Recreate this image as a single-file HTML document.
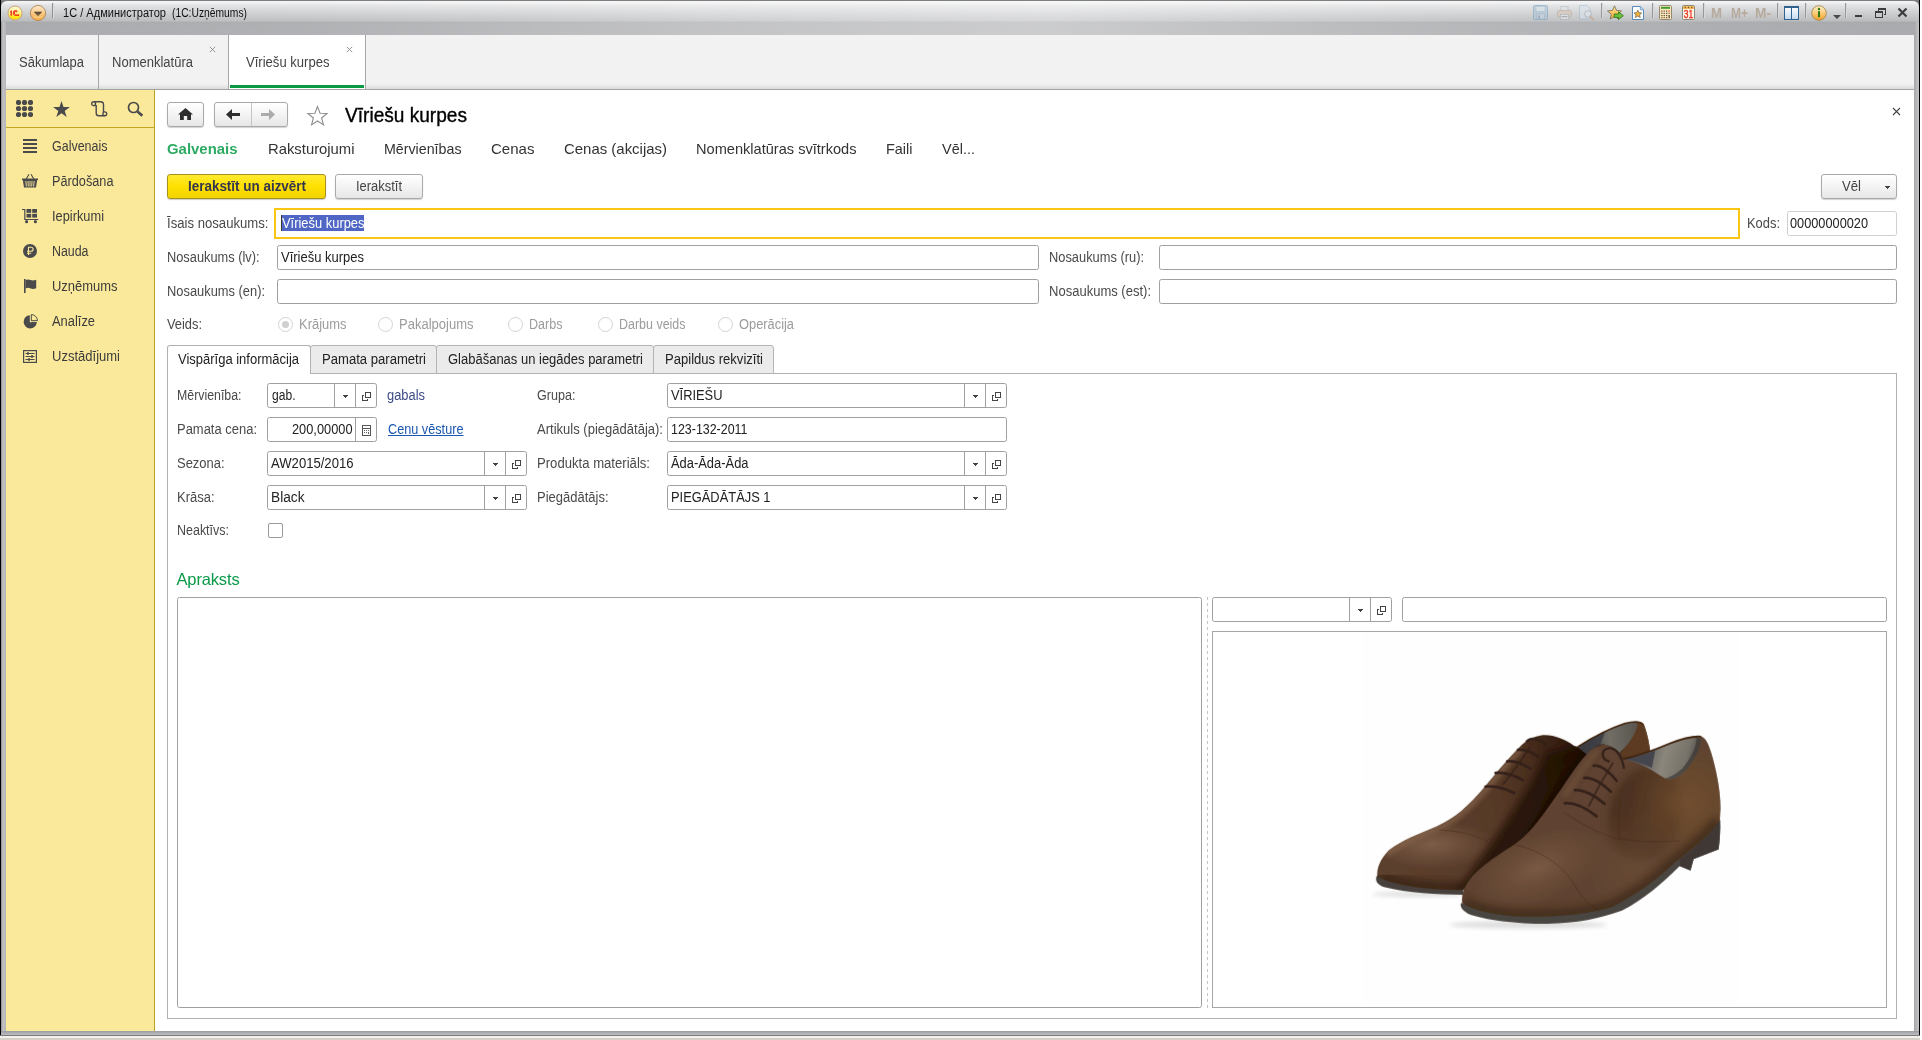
<!DOCTYPE html>
<html lang="lv"><head><meta charset="utf-8"><title>Vīriešu kurpes</title>
<style>
html,body{margin:0;padding:0;background:#fff;}
body{width:1922px;height:1040px;position:relative;overflow:hidden;font-family:"Liberation Sans", sans-serif;}
#root div,#root svg{position:absolute;box-sizing:border-box;}
.t{position:absolute;white-space:pre;line-height:20px;height:20px;}
#root{position:absolute;left:0;top:0;width:1922px;height:1040px;will-change:transform;}
</style></head>
<body><div id="root">
<div style="left:0px;top:0px;width:1920px;height:35px;background:#7e7e80;"></div>
<div style="left:1px;top:1px;width:1918px;height:34px;border-radius:6px 6px 0 0;background:linear-gradient(#f4f4f5 0,#f0f0f1 2px,#e2e3e4 4px,#cbccce 13px,#bbbcbe 20px,#a9aaad 21px,#abacaf 34px);"></div>
<div style="left:1px;top:1px;width:1918px;height:34px;border-radius:6px 6px 0 0;background:linear-gradient(90deg,rgba(255,255,255,0) 0,rgba(255,255,255,.08) 16%,rgba(255,255,255,.3) 38%,rgba(255,255,255,.4) 54%,rgba(255,255,255,.18) 73%,rgba(255,255,255,.04) 90%,rgba(255,255,255,0) 99%);"></div>
<div style="left:0px;top:0px;width:1px;height:1036px;background:#000;"></div>
<div style="left:1px;top:22px;width:5px;height:1014px;background:linear-gradient(90deg,#8e8e90,#c4c4c6 40%,#b4b4b7);"></div>
<div style="left:1914px;top:22px;width:5px;height:1014px;background:linear-gradient(90deg,#a6a6a9,#b6b6b9 50%,#c6c6c8);"></div>
<div style="left:1919px;top:0px;width:1px;height:1036px;background:#000;"></div>
<div style="left:1px;top:1031px;width:1918px;height:4px;background:linear-gradient(#9b9ca0,#adaeb1 50%,#bcbdc0);"></div>
<div style="left:0px;top:1035px;width:1920px;height:1px;background:#7b7b7d;"></div>
<div style="left:0px;top:1036px;width:1920px;height:2px;background:#f2f1ea;"></div>
<div style="left:0px;top:1038px;width:1920px;height:2px;background:#d4d0c8;"></div>
<div style="left:6px;top:35px;width:1908px;height:54px;background:#f2f2f2;"></div>
<div style="left:6px;top:84px;width:1908px;height:5px;background:linear-gradient(#f2f2f2,#dcdcdc);"></div>
<div style="left:6px;top:89px;width:1908px;height:1px;background:#a3a3a3;"></div>
<div style="left:98px;top:35px;width:1px;height:54px;background:#a8a8a8;"></div>
<div style="left:228px;top:35px;width:1px;height:54px;background:#a8a8a8;"></div>
<div style="left:365px;top:35px;width:1px;height:54px;background:#a8a8a8;"></div>
<div style="left:229px;top:35px;width:136px;height:54px;background:#fff;"></div>
<div style="left:230px;top:85px;width:134px;height:3px;background:#0a9a44;"></div>
<div style="left:6px;top:90px;width:148px;height:941px;background:#fbe99b;"></div>
<div style="left:154px;top:90px;width:1px;height:941px;background:#bfa31e;"></div>
<div style="left:6px;top:127px;width:148px;height:1px;background:#c4a622;"></div>
<div style="left:155px;top:90px;width:1759px;height:941px;background:#fff;"></div>
<div style="left:167px;top:102px;width:37px;height:25px;border:1px solid #a9a9a9;border-radius:3px;background:linear-gradient(#ffffff,#f4f4f4 50%,#e6e6e6);box-shadow:0 1px 1px rgba(0,0,0,.18);"></div>
<div style="left:214px;top:102px;width:74px;height:25px;border:1px solid #a9a9a9;border-radius:3px;background:linear-gradient(#ffffff,#f4f4f4 50%,#e6e6e6);box-shadow:0 1px 1px rgba(0,0,0,.18);"></div>
<div style="left:251px;top:103px;width:1px;height:23px;background:#c4c4c4;"></div>
<svg style="left:178px;top:108px" width="15" height="12" viewBox="0 0 15 12"><path d="M7.5 0L0 6.6h2V12h3.8V8h3.4v4H13V6.6h2z" fill="#2e2e2e"/></svg>
<svg style="left:226px;top:109px" width="14" height="11" viewBox="0 0 14 11"><path d="M6 0L0 5.5 6 11V7h8V4H6z" fill="#2e2e2e"/></svg>
<svg style="left:261px;top:109px" width="14" height="11" viewBox="0 0 14 11"><path d="M8 0l6 5.5L8 11V7H0V4h8z" fill="#ababab"/></svg>
<svg style="left:306px;top:104.500px" width="23" height="22" viewBox="0 0 23 22"><path d="M11.5 1.6l2.55 6.6 7.05.35-5.5 4.45 1.85 6.85-5.95-3.85-5.95 3.85 1.85-6.85-5.5-4.45 7.05-.35z" fill="#fff" stroke="#8c8c8c" stroke-width="1.1" stroke-linejoin="miter"/></svg>
<svg style="left:1892px;top:107px" width="9" height="9" viewBox="0 0 9 9"><path d="M1 1l7 7M8 1l-7 7" stroke="#444" stroke-width="1.1" fill="none"/></svg>
<div style="left:167px;top:174px;width:159px;height:25px;border:1px solid #a8901c;border-radius:3px;background:linear-gradient(#ffea30,#ffe000 50%,#f1d300);box-shadow:0 1px 1px rgba(0,0,0,.2);"></div>
<div style="left:335px;top:174px;width:88px;height:25px;border:1px solid #a9a9a9;border-radius:3px;background:linear-gradient(#ffffff,#f4f4f4 50%,#e6e6e6);box-shadow:0 1px 1px rgba(0,0,0,.18);"></div>
<div style="left:1821px;top:174px;width:76px;height:25px;border:1px solid #a9a9a9;border-radius:3px;background:linear-gradient(#ffffff,#f4f4f4 50%,#e6e6e6);box-shadow:0 1px 1px rgba(0,0,0,.18);"></div>
<svg style="left:1885px;top:186px" width="5" height="3" shape-rendering="crispEdges"><path d="M0 0h5v1h-5zM1 1h3v1h-3zM2 2h1v1h-1z" fill="#444"/></svg>
<div style="left:274px;top:208px;width:1466px;height:31px;border:2px solid #fbc514;background:#fff;"></div>
<div style="left:281px;top:215px;width:83px;height:16px;background:#4f66c4;"></div>
<div style="left:281px;top:215px;width:1px;height:16px;background:#3a3a30;"></div>
<div style="left:1787px;top:211px;width:110px;height:25px;border:1px solid #d0d0d0;border-radius:2.5px;background:#fff;"></div>
<div style="left:277px;top:245px;width:762px;height:25px;border:1px solid #a0a0a0;border-radius:2.5px;background:#fff;"></div>
<div style="left:1159px;top:245px;width:738px;height:25px;border:1px solid #a0a0a0;border-radius:2.5px;background:#fff;"></div>
<div style="left:277px;top:279px;width:762px;height:25px;border:1px solid #a0a0a0;border-radius:2.5px;background:#fff;"></div>
<div style="left:1159px;top:279px;width:738px;height:25px;border:1px solid #a0a0a0;border-radius:2.5px;background:#fff;"></div>
<div style="left:278.0px;top:317px;width:15px;height:15px;border:1.3px solid #d4d4d4;border-radius:50%;background:#fff;"></div>
<div style="left:378.0px;top:317px;width:15px;height:15px;border:1.3px solid #d4d4d4;border-radius:50%;background:#fff;"></div>
<div style="left:508.0px;top:317px;width:15px;height:15px;border:1.3px solid #d4d4d4;border-radius:50%;background:#fff;"></div>
<div style="left:598.0px;top:317px;width:15px;height:15px;border:1.3px solid #d4d4d4;border-radius:50%;background:#fff;"></div>
<div style="left:718.0px;top:317px;width:15px;height:15px;border:1.3px solid #d4d4d4;border-radius:50%;background:#fff;"></div>
<div style="left:282px;top:321px;width:7px;height:7px;border-radius:50%;background:#cfcfcf;"></div>
<div style="left:167px;top:373px;width:1730px;height:646px;border:1px solid #b0b0b0;background:#fff;"></div>
<div style="left:310px;top:345px;width:127px;height:29px;border:1px solid #b4b4b4;border-radius:3px 3px 0 0;background:#ebebeb;"></div>
<div style="left:436px;top:345px;width:218px;height:29px;border:1px solid #b4b4b4;border-radius:3px 3px 0 0;background:#ebebeb;"></div>
<div style="left:653px;top:345px;width:121px;height:29px;border:1px solid #b4b4b4;border-radius:3px 3px 0 0;background:#ebebeb;"></div>
<div style="left:167px;top:345px;width:144px;height:29px;border:1px solid #b0b0b0;border-bottom:none;border-radius:3px 3px 0 0;background:#fff;"></div>
<div style="left:267px;top:383px;width:110px;height:25px;border:1px solid #a0a0a0;border-radius:2.5px;background:#fff;"></div>
<div style="left:355px;top:384px;width:1px;height:23px;background:#a0a0a0;"></div>
<div style="left:334px;top:384px;width:1px;height:23px;background:#a0a0a0;"></div>
<svg style="left:343px;top:395px" width="5" height="3" shape-rendering="crispEdges"><path d="M0 0h5v1h-5zM1 1h3v1h-3zM2 2h1v1h-1z" fill="#444"/></svg>
<svg style="left:362px;top:392px" width="9" height="9" shape-rendering="crispEdges"><path d="M3 0h6v6h-6zM4 1v4h4v-4z" fill-rule="evenodd" fill="#444"/><path d="M0 3h2v1h-1v4h4v-1h1v2h-6z" fill="#444"/></svg>
<div style="left:667px;top:383px;width:340px;height:25px;border:1px solid #a0a0a0;border-radius:2.5px;background:#fff;"></div>
<div style="left:985px;top:384px;width:1px;height:23px;background:#a0a0a0;"></div>
<div style="left:964px;top:384px;width:1px;height:23px;background:#a0a0a0;"></div>
<svg style="left:973px;top:395px" width="5" height="3" shape-rendering="crispEdges"><path d="M0 0h5v1h-5zM1 1h3v1h-3zM2 2h1v1h-1z" fill="#444"/></svg>
<svg style="left:992px;top:392px" width="9" height="9" shape-rendering="crispEdges"><path d="M3 0h6v6h-6zM4 1v4h4v-4z" fill-rule="evenodd" fill="#444"/><path d="M0 3h2v1h-1v4h4v-1h1v2h-6z" fill="#444"/></svg>
<div style="left:267px;top:417px;width:110px;height:25px;border:1px solid #a0a0a0;border-radius:2.5px;background:#fff;"></div>
<div style="left:355px;top:418px;width:1px;height:23px;background:#a0a0a0;"></div>
<div style="left:667px;top:417px;width:340px;height:25px;border:1px solid #a0a0a0;border-radius:2.5px;background:#fff;"></div>
<div style="left:267px;top:451px;width:260px;height:25px;border:1px solid #a0a0a0;border-radius:2.5px;background:#fff;"></div>
<div style="left:505px;top:452px;width:1px;height:23px;background:#a0a0a0;"></div>
<div style="left:484px;top:452px;width:1px;height:23px;background:#a0a0a0;"></div>
<svg style="left:493px;top:463px" width="5" height="3" shape-rendering="crispEdges"><path d="M0 0h5v1h-5zM1 1h3v1h-3zM2 2h1v1h-1z" fill="#444"/></svg>
<svg style="left:512px;top:460px" width="9" height="9" shape-rendering="crispEdges"><path d="M3 0h6v6h-6zM4 1v4h4v-4z" fill-rule="evenodd" fill="#444"/><path d="M0 3h2v1h-1v4h4v-1h1v2h-6z" fill="#444"/></svg>
<div style="left:667px;top:451px;width:340px;height:25px;border:1px solid #a0a0a0;border-radius:2.5px;background:#fff;"></div>
<div style="left:985px;top:452px;width:1px;height:23px;background:#a0a0a0;"></div>
<div style="left:964px;top:452px;width:1px;height:23px;background:#a0a0a0;"></div>
<svg style="left:973px;top:463px" width="5" height="3" shape-rendering="crispEdges"><path d="M0 0h5v1h-5zM1 1h3v1h-3zM2 2h1v1h-1z" fill="#444"/></svg>
<svg style="left:992px;top:460px" width="9" height="9" shape-rendering="crispEdges"><path d="M3 0h6v6h-6zM4 1v4h4v-4z" fill-rule="evenodd" fill="#444"/><path d="M0 3h2v1h-1v4h4v-1h1v2h-6z" fill="#444"/></svg>
<div style="left:267px;top:485px;width:260px;height:25px;border:1px solid #a0a0a0;border-radius:2.5px;background:#fff;"></div>
<div style="left:505px;top:486px;width:1px;height:23px;background:#a0a0a0;"></div>
<div style="left:484px;top:486px;width:1px;height:23px;background:#a0a0a0;"></div>
<svg style="left:493px;top:497px" width="5" height="3" shape-rendering="crispEdges"><path d="M0 0h5v1h-5zM1 1h3v1h-3zM2 2h1v1h-1z" fill="#444"/></svg>
<svg style="left:512px;top:494px" width="9" height="9" shape-rendering="crispEdges"><path d="M3 0h6v6h-6zM4 1v4h4v-4z" fill-rule="evenodd" fill="#444"/><path d="M0 3h2v1h-1v4h4v-1h1v2h-6z" fill="#444"/></svg>
<div style="left:667px;top:485px;width:340px;height:25px;border:1px solid #a0a0a0;border-radius:2.5px;background:#fff;"></div>
<div style="left:985px;top:486px;width:1px;height:23px;background:#a0a0a0;"></div>
<div style="left:964px;top:486px;width:1px;height:23px;background:#a0a0a0;"></div>
<svg style="left:973px;top:497px" width="5" height="3" shape-rendering="crispEdges"><path d="M0 0h5v1h-5zM1 1h3v1h-3zM2 2h1v1h-1z" fill="#444"/></svg>
<svg style="left:992px;top:494px" width="9" height="9" shape-rendering="crispEdges"><path d="M3 0h6v6h-6zM4 1v4h4v-4z" fill-rule="evenodd" fill="#444"/><path d="M0 3h2v1h-1v4h4v-1h1v2h-6z" fill="#444"/></svg>
<div style="left:268px;top:523px;width:15px;height:15px;border:1px solid #9a9a9a;border-radius:2px;background:#fff;"></div>
<div style="left:177px;top:597px;width:1025px;height:411px;border:1px solid #a0a0a0;border-radius:2.5px;background:#fff;"></div>
<div style="left:1212px;top:597px;width:180px;height:25px;border:1px solid #a0a0a0;border-radius:2.5px;background:#fff;"></div>
<div style="left:1370px;top:598px;width:1px;height:23px;background:#a0a0a0;"></div>
<div style="left:1349px;top:598px;width:1px;height:23px;background:#a0a0a0;"></div>
<svg style="left:1358px;top:609px" width="5" height="3" shape-rendering="crispEdges"><path d="M0 0h5v1h-5zM1 1h3v1h-3zM2 2h1v1h-1z" fill="#444"/></svg>
<svg style="left:1377px;top:606px" width="9" height="9" shape-rendering="crispEdges"><path d="M3 0h6v6h-6zM4 1v4h4v-4z" fill-rule="evenodd" fill="#444"/><path d="M0 3h2v1h-1v4h4v-1h1v2h-6z" fill="#444"/></svg>
<div style="left:1402px;top:597px;width:485px;height:25px;border:1px solid #a0a0a0;border-radius:2.5px;background:#fff;"></div>
<div style="left:1212px;top:631px;width:675px;height:377px;border:1px solid #a6a6a6;background:#fff;"></div>
<div style="left:1207px;top:597px;width:1px;height:411px;background:repeating-linear-gradient(#c4c4c4 0,#c4c4c4 3px,#fff 3px,#fff 6px);"></div>
<svg style="left:7px;top:5px" width="16" height="16" viewBox="0 0 16 16"><defs><linearGradient id="g1c" x1="0" y1="0" x2="0" y2="1"><stop offset="0" stop-color="#fffbe0"/><stop offset=".55" stop-color="#fff27a"/><stop offset=".75" stop-color="#ffe81c"/><stop offset="1" stop-color="#f9dc10"/></linearGradient></defs><circle cx="8" cy="8" r="7" fill="url(#g1c)" stroke="#c9a27a" stroke-width="1"/><path d="M3.2 6.3L4.8 5.2v5.6H3.6V6.9l-.4.3z" fill="#e61010"/><path d="M12.2 9.6H8.6C7.4 9.6 6.9 8.9 6.9 8s.6-1.7 1.7-1.7c.7 0 1.1.3 1.4.7l-.6.5c-.2-.3-.4-.4-.8-.4-.5 0-.9.4-.9.9s.3.9.9.9h3.6zM5.8 8c0-1.600 1.200-2.800 2.800-2.800 1 0 1.700.4 2.200 1l-.6.5c-.4-.5-.9-.8-1.600-.8C7.500 5.900 6.600 6.800 6.600 8s.8 2.100 2 2.100h3.600v.7H8.600C7 10.800 5.800 9.600 5.800 8z" fill="#e61010"/></svg>
<svg style="left:29px;top:4px" width="18" height="18" viewBox="0 0 18 18"><defs><linearGradient id="gor" x1="0" y1="0" x2="0" y2="1"><stop offset="0" stop-color="#fdebd0"/><stop offset=".5" stop-color="#f9c987"/><stop offset="1" stop-color="#f6a93a"/></linearGradient><linearGradient id="gtr" x1="0" y1="0" x2="0" y2="1"><stop offset="0" stop-color="#4a3c28"/><stop offset="1" stop-color="#9a8660"/></linearGradient></defs><circle cx="9" cy="9" r="7.6" fill="url(#gor)" stroke="#b08858" stroke-width=".9"/><path d="M4.8 7.8h8.400L9 12.600z" fill="url(#gtr)"/><path d="M5 12.800L9 13.400l4-.6" stroke="#fff3dd" stroke-width=".6" fill="none" opacity=".7"/></svg>
<div style="left:52px;top:3px;width:1px;height:15px;background:#8f9092;"></div>
<div style="left:53px;top:3px;width:1px;height:15px;background:#dcdddf;"></div>
<div style="left:1601px;top:3px;width:1px;height:15px;background:#97989a;"></div>
<div style="left:1602px;top:3px;width:1px;height:15px;background:#d8d9db;"></div>
<div style="left:1652px;top:3px;width:1px;height:15px;background:#97989a;"></div>
<div style="left:1653px;top:3px;width:1px;height:15px;background:#d8d9db;"></div>
<div style="left:1703px;top:3px;width:1px;height:15px;background:#97989a;"></div>
<div style="left:1704px;top:3px;width:1px;height:15px;background:#d8d9db;"></div>
<div style="left:1777px;top:3px;width:1px;height:15px;background:#97989a;"></div>
<div style="left:1778px;top:3px;width:1px;height:15px;background:#d8d9db;"></div>
<div style="left:1805px;top:3px;width:1px;height:15px;background:#97989a;"></div>
<div style="left:1806px;top:3px;width:1px;height:15px;background:#d8d9db;"></div>
<div style="left:1845px;top:3px;width:1px;height:15px;background:#97989a;"></div>
<div style="left:1846px;top:3px;width:1px;height:15px;background:#d8d9db;"></div>
<svg style="left:1533px;top:5px" width="15" height="15" viewBox="0 0 15 15" opacity=".55"><rect x=".5" y=".5" width="14" height="14" rx="1" fill="#a9c3d6" stroke="#6f9bbd"/><rect x="3" y="1.500" width="9" height="5" fill="#d7e4ee" stroke="#86abc8" stroke-width=".6"/><rect x="3.500" y="9" width="8" height="5" fill="#c2d4e2" stroke="#7fa4c2" stroke-width=".6"/><rect x="5" y="10.500" width="2" height="3" fill="#7399b8"/></svg>
<svg style="left:1557px;top:6px" width="15" height="14" viewBox="0 0 15 14" opacity=".5"><rect x="4" y=".5" width="7" height="5" fill="#dfe6ec" stroke="#9aa7b3" stroke-width=".8"/><rect x=".5" y="4.500" width="14" height="6.500" rx="1.500" fill="#d9c3b0" stroke="#b19a88" stroke-width=".9"/><rect x="3.500" y="8.500" width="8" height="5" fill="#eceff2" stroke="#9aa7b3" stroke-width=".8"/><rect x="4.500" y="10" width="6" height="1.200" fill="#8d8d8d"/></svg>
<svg style="left:1579px;top:5px" width="16" height="16" viewBox="0 0 16 16" opacity=".5"><path d="M.5.5h7.500l3 3v10.500H.5z" fill="#dbe6ef" stroke="#8fb0cb" stroke-width=".9"/><circle cx="9" cy="9" r="3.200" fill="#e6eef5" stroke="#98a9bb" stroke-width="1.100"/><path d="M11.300 11.300l3.200 3.400" stroke="#c49a78" stroke-width="1.900" stroke-linecap="round"/></svg>
<svg style="left:1607px;top:5px" width="17" height="16" viewBox="0 0 17 16"><defs><linearGradient id="gst" x1="0" y1="0" x2="0" y2="1"><stop offset="0" stop-color="#ffe9a0"/><stop offset="1" stop-color="#f5a827"/></linearGradient></defs><path d="M7.500.8l2 4.600 5 .5-3.800 3.300 1.100 4.900-4.300-2.600-4.300 2.600 1.100-4.900L.5 5.900l5-.5z" fill="url(#gst)" stroke="#7a7468" stroke-width=".9"/><path d="M7.200 9h4.300V6.800l4.800 3.900-4.800 3.900v-2.200H7.200z" fill="#6cc040" stroke="#2f7d12" stroke-width=".9"/></svg>
<svg style="left:1632px;top:6px" width="12" height="14" viewBox="0 0 12 14"><path d="M.5.5h7.800l3.200 3.200v9.800H.5z" fill="#fdfeff" stroke="#4a80b4" stroke-width=".9"/><path d="M8.300.5v3.200h3.200" fill="#d8e6f3" stroke="#4a80b4" stroke-width=".7"/><path d="M5.800 4.200l1.150 2.500 2.750.3-2.100 1.800.65 2.700-2.450-1.450-2.450 1.450.65-2.700-2.100-1.800 2.750-.3z" fill="#f4b43c" stroke="#6b5c45" stroke-width=".7"/></svg>
<svg style="left:1659px;top:5px" width="13" height="15" viewBox="0 0 13 15"><rect x=".5" y=".5" width="12" height="14" rx="1" fill="#fbe4b8" stroke="#938873" stroke-width="1"/><rect x="2" y="1.800" width="9" height="2" fill="#3f9c2d"/><g fill="#5a5040"><rect x="2.2" y="5.6" width="1.300" height="1.100"/><rect x="4.6" y="5.6" width="1.300" height="1.100"/><rect x="7" y="5.6" width="1.300" height="1.100"/><rect x="2.2" y="7.8" width="1.300" height="1.100"/><rect x="4.6" y="7.8" width="1.300" height="1.100"/><rect x="7" y="7.8" width="1.300" height="1.100"/><rect x="2.2" y="10" width="1.300" height="1.100"/><rect x="4.6" y="10" width="1.300" height="1.100"/><rect x="7" y="10" width="1.300" height="1.100"/><rect x="2.2" y="12.1" width="1.300" height="1.100"/><rect x="4.6" y="12.1" width="1.300" height="1.100"/><rect x="7" y="12.1" width="1.300" height="1.100"/><rect x="9.500" y="7.800" width="1.300" height="1.100"/><rect x="9.500" y="10" width="1.300" height="3.200"/></g><rect x="9.500" y="5.600" width="1.300" height="1.100" fill="#e0301a"/></svg>
<svg style="left:1682px;top:5px" width="13" height="15" viewBox="0 0 13 15"><rect x=".5" y=".5" width="12" height="14" rx="1" fill="#fdf3e2" stroke="#8f8a80" stroke-width="1"/><rect x="1" y="1" width="11" height="3" fill="#f5bd62"/><g fill="#7a5a20"><rect x="2.500" y="1.800" width="1.400" height="1.400"/><rect x="5.800" y="1.800" width="1.400" height="1.400"/><rect x="9.100" y="1.800" width="1.400" height="1.400"/></g><text x="6.500" y="13.200" font-family="Liberation Sans, sans-serif" font-size="10.500" fill="#e8281a" stroke="#e8281a" stroke-width=".3" text-anchor="middle" textLength="9.400" lengthAdjust="spacingAndGlyphs">31</text></svg>
<svg style="left:1784px;top:6px" width="15" height="14" viewBox="0 0 15 14"><defs><linearGradient id="gpn" x1="0" y1="0" x2="0" y2="1"><stop offset="0" stop-color="#ffffff"/><stop offset="1" stop-color="#c3d9ee"/></linearGradient></defs><rect x=".5" y=".5" width="14" height="13" fill="url(#gpn)" stroke="#2f628f" stroke-width="1"/><rect x="0" y="0" width="15" height="2" fill="#2f628f"/><rect x="7" y="2" width="1" height="11.500" fill="#2f628f"/></svg>
<svg style="left:1811px;top:5px" width="16" height="16" viewBox="0 0 16 16"><defs><linearGradient id="gin" x1="0" y1="0" x2="0" y2="1"><stop offset="0" stop-color="#fdeecd"/><stop offset=".5" stop-color="#f9cd7a"/><stop offset="1" stop-color="#f1a024"/></linearGradient></defs><circle cx="8" cy="8" r="7.300" fill="url(#gin)" stroke="#a88850" stroke-width=".9"/><rect x="7" y="6.200" width="2" height="6" fill="#2d7a14"/><circle cx="8" cy="4" r="1.200" fill="#2d7a14"/></svg>
<svg style="left:1833px;top:15px" width="8" height="4" viewBox="0 0 8 4"><path d="M0 0h8L4 4z" fill="#4a4a4c"/></svg>
<div style="left:1855px;top:15px;width:7px;height:2px;background:#3c3c3e;"></div>
<svg style="left:1875px;top:8px" width="11" height="10" viewBox="0 0 11 10" shape-rendering="crispEdges"><path d="M3 0h8v7h-2v-1h1v-4h-6v1h-1z" fill="#3c3c3e"/><path d="M0 3h8v7h-8zM1 5v4h6v-4z" fill="#3c3c3e" fill-rule="evenodd"/></svg>
<svg style="left:1897px;top:7px" width="11" height="11" viewBox="0 0 11 11"><path d="M1.500 1.500l8 8M9.500 1.500l-8 8" stroke="#3c3c3e" stroke-width="2.200"/></svg>
<svg style="left:209.0px;top:46px" width="7" height="7" viewBox="0 0 7 7"><path d="M.8.8l5.400 5.400M6.200.8L.8 6.200" stroke="#8a8a8a" stroke-width=".9" fill="none"/></svg>
<svg style="left:346.0px;top:46px" width="7" height="7" viewBox="0 0 7 7"><path d="M.8.8l5.400 5.400M6.200.8L.8 6.200" stroke="#8a8a8a" stroke-width=".9" fill="none"/></svg>
<svg style="left:16px;top:100px" width="17" height="17" viewBox="0 0 17 17" fill="#4a4a4c"><circle cx="2.5" cy="2.5" r="2.600"/><circle cx="2.5" cy="8.5" r="2.600"/><circle cx="2.5" cy="14.5" r="2.600"/><circle cx="8.5" cy="2.5" r="2.600"/><circle cx="8.5" cy="8.5" r="2.600"/><circle cx="8.5" cy="14.5" r="2.600"/><circle cx="14.5" cy="2.5" r="2.600"/><circle cx="14.5" cy="8.5" r="2.600"/><circle cx="14.5" cy="14.5" r="2.600"/></svg>
<svg style="left:53px;top:101px" width="17" height="16" viewBox="0 0 17 16"><path d="M8.500 0l2 6.100h6.400l-5.200 3.800 2 6.100-5.200-3.800-5.200 3.800 2-6.100L.1 6.100h6.400z" fill="#4a4a4c"/></svg>
<svg style="left:91px;top:101px" width="17" height="16" viewBox="0 0 17 16" fill="none" stroke="#4a4a4c" stroke-width="1.400"><path d="M3.800 4.600h1.400v7.300c0 1.700 1 2.800 2.600 2.800h5.800"/><path d="M2.600.8h7.200c1.700 0 2.700 1.100 2.700 2.800v7.300"/><circle cx="2.600" cy="2.700" r="1.900" fill="#fbe99b"/><circle cx="13.800" cy="12.800" r="1.900" fill="#fbe99b"/></svg>
<svg style="left:127px;top:101px" width="17" height="16" viewBox="0 0 17 16" fill="none" stroke="#4a4a4c"><circle cx="6.500" cy="6.500" r="5" stroke-width="1.700"/><path d="M10.500 10.500l4.800 4.300" stroke-width="2.700"/></svg>
<div style="left:23px;top:139px;width:14px;height:2px;background:#4a4a4c;"></div>
<div style="left:23px;top:143px;width:14px;height:2px;background:#4a4a4c;"></div>
<div style="left:23px;top:147px;width:14px;height:2px;background:#4a4a4c;"></div>
<div style="left:23px;top:151px;width:14px;height:2px;background:#4a4a4c;"></div>
<svg style="left:22px;top:173px" width="16" height="15" viewBox="0 0 16 15"><path d="M4.200 6L7 1.200M11.800 6L9 1.200" stroke="#4a4a4c" stroke-width="1.100" fill="none"/><path d="M0 5.500h16v1.600h-16z" fill="#4a4a4c"/><path d="M.8 7l1.200 7.500h12l1.200-7.500z" fill="#4a4a4c"/><g stroke="#fbe99b" stroke-width=".9"><path d="M3.800 8l.6 5.500M6 8l.3 5.500M8 8v5.500M10 8l-.3 5.500M12.200 8l-.6 5.500"/></g></svg>
<svg style="left:22px;top:208px" width="17" height="16" viewBox="0 0 17 16"><g fill="#4a4a4c"><rect x="4.500" y="1" width="4.700" height="3.800"/><rect x="10.200" y="1" width="4.800" height="3.800"/><rect x="4.500" y="5.800" width="4.700" height="3.800"/><rect x="10.200" y="5.800" width="4.800" height="3.800"/><circle cx="4.600" cy="13.700" r="1.600"/><circle cx="13.400" cy="13.700" r="1.600"/></g><path d="M0 1.500h2.800v10h13.500" stroke="#4a4a4c" stroke-width="1.200" fill="none"/></svg>
<svg style="left:23px;top:244px" width="14" height="14" viewBox="0 0 14 14"><circle cx="7" cy="7" r="7" fill="#4a4a4c"/><path d="M5.500 11V3.200h2.400c1.400 0 2.200.9 2.200 2s-.8 2-2.200 2H4M4 9.200h4.200" stroke="#fbe99b" stroke-width="1.100" fill="none"/></svg>
<svg style="left:24px;top:279px" width="13" height="14" viewBox="0 0 13 14"><rect x="0" y="0" width="1.600" height="14" fill="#4a4a4c"/><path d="M1.600 1c2-.9 3.500-.6 5 0s3 .8 5.600-.2v8.400c-2.600 1-4.100.8-5.600.2s-3-.9-5-.0z" fill="#4a4a4c"/></svg>
<svg style="left:23px;top:314px" width="15" height="15" viewBox="0 0 15 15"><path d="M6.800 1.200A6.600 6.600 0 1 0 13.800 8.200H6.800z" fill="#4a4a4c"/><path d="M8.300.6v6.100h6.100A6.100 6.100 0 0 0 8.300.6z" fill="#fbe99b" stroke="#4a4a4c" stroke-width="1"/><path d="M8.300 8.200h5.500l-3.200 4.300z" fill="#4a4a4c"/></svg>
<svg style="left:23px;top:350px" width="14" height="13" viewBox="0 0 14 13"><rect x=".6" y=".6" width="12.800" height="11.800" fill="none" stroke="#4a4a4c" stroke-width="1.200"/><g stroke="#4a4a4c" stroke-width="1.100"><path d="M2.500 3.500h9M2.500 6.500h9M2.500 9.500h9"/></g><g fill="#4a4a4c"><rect x="4" y="2.300" width="2" height="2.400"/><rect x="8" y="5.300" width="2" height="2.400"/><rect x="5" y="8.300" width="2" height="2.400"/></g></svg>
<svg style="left:362px;top:425px" width="9" height="11" viewBox="0 0 9 11" shape-rendering="crispEdges"><path d="M0 0h9v11h-9zM1 1v2h7v-2zM1 4v6h7v-6z" fill="#555" fill-rule="evenodd"/><g fill="#666"><rect x="2" y="5" width="1" height="1"/><rect x="4" y="5" width="1" height="1"/><rect x="6" y="5" width="1" height="1"/><rect x="2" y="7" width="1" height="1"/><rect x="4" y="7" width="1" height="1"/><rect x="6" y="7" width="1" height="2"/><rect x="2" y="9" width="1" height="0"/></g></svg>
<div style="left:1362px;top:632px;width:376px;height:375px;background:#fefefe;"></div>
<svg style="left:1360px;top:700px" width="380" height="250" viewBox="0 0 1581 1040"><defs><linearGradient id="sbk" gradientUnits="userSpaceOnUse" x1="150" y1="520" x2="950" y2="330"><stop offset="0" stop-color="#5c3f2d"/><stop offset=".5" stop-color="#573a28"/><stop offset=".72" stop-color="#4a2f1e"/><stop offset=".9" stop-color="#382012"/><stop offset="1" stop-color="#2a160a"/></linearGradient><radialGradient id="stoe" gradientUnits="userSpaceOnUse" cx="740" cy="700" r="300" gradientTransform="translate(740 700) rotate(-22) scale(1 .5) translate(-740 -700)"><stop offset="0" stop-color="#7e5e47" stop-opacity=".85"/><stop offset=".5" stop-color="#765640" stop-opacity=".5"/><stop offset="1" stop-color="#765640" stop-opacity="0"/></radialGradient><radialGradient id="sheel" gradientUnits="userSpaceOnUse" cx="1360" cy="430" r="260"><stop offset="0" stop-color="#73502f" stop-opacity=".9"/><stop offset="1" stop-color="#73502f" stop-opacity="0"/></radialGradient><radialGradient id="smid" gradientUnits="userSpaceOnUse" cx="1150" cy="700" r="260"><stop offset="0" stop-color="#6b4c36" stop-opacity=".7"/><stop offset="1" stop-color="#6b4c36" stop-opacity="0"/></radialGradient><radialGradient id="stoeb" gradientUnits="userSpaceOnUse" cx="300" cy="600" r="260" gradientTransform="translate(300 600) scale(1 .4) translate(-300 -600)"><stop offset="0" stop-color="#80614b" stop-opacity=".9"/><stop offset="1" stop-color="#80614b" stop-opacity="0"/></radialGradient><linearGradient id="slin" gradientUnits="userSpaceOnUse" x1="1180" y1="200" x2="1400" y2="260"><stop offset="0" stop-color="#5c5a58"/><stop offset=".4" stop-color="#8b877c"/><stop offset=".8" stop-color="#77736a"/><stop offset="1" stop-color="#4d4944"/></linearGradient><linearGradient id="slinb" gradientUnits="userSpaceOnUse" x1="930" y1="170" x2="1150" y2="150"><stop offset="0" stop-color="#46464a"/><stop offset=".5" stop-color="#716e66"/><stop offset="1" stop-color="#5b5750"/></linearGradient><filter id="sblur" x="-5%" y="-5%" width="110%" height="110%"><feGaussianBlur stdDeviation="2.4"/></filter><filter id="sblur2" x="-30%" y="-30%" width="160%" height="160%"><feGaussianBlur stdDeviation="16"/></filter><filter id="sblur3" x="-30%" y="-30%" width="160%" height="160%"><feGaussianBlur stdDeviation="9"/></filter><clipPath id="cback"><path d="M72 735C68 700 85 660 120 625C170 585 250 555 320 525C400 490 450 440 520 360C570 300 620 240 665 195C690 170 720 152 760 146C800 142 850 160 890 190L905 195C960 160 1040 118 1100 98C1140 86 1170 88 1180 105C1195 140 1203 180 1207 215L1100 300L900 500L600 760L420 790C300 790 150 775 72 735Z"/></clipPath><clipPath id="cfront"><path d="M425 845C420 800 440 755 490 710C540 665 600 630 650 595C720 545 780 450 840 365C880 305 920 245 960 208C985 188 1015 180 1040 190C1065 200 1085 225 1095 245C1150 235 1220 210 1290 180C1340 160 1390 148 1420 152C1440 158 1450 185 1460 215C1480 280 1500 370 1500 450L1497 500C1450 565 1390 615 1310 675C1240 745 1150 810 1050 860C950 892 800 905 650 900C540 892 460 870 425 845Z"/></clipPath></defs><g filter="url(#sblur)"><!-- ground shadow --><ellipse cx="700" cy="935" rx="330" ry="16" fill="#000" opacity=".13" filter="url(#sblur3)"/><ellipse cx="240" cy="808" rx="190" ry="12" fill="#000" opacity=".12" filter="url(#sblur3)"/><!-- back shoe sole --><path d="M68 735C64 752 70 768 100 778C200 802 320 810 430 810L430 785C300 788 150 770 72 730Z" fill="#46403c"/><!-- back shoe upper --><path d="M72 735C68 700 85 660 120 625C170 585 250 555 320 525C400 490 450 440 520 360C570 300 620 240 665 195C690 170 720 152 760 146C800 142 850 160 890 190L905 195C960 160 1040 118 1100 98C1140 86 1170 88 1180 105C1195 140 1203 180 1207 215L1100 300L900 500L600 760L420 790C300 790 150 775 72 735Z" fill="url(#sbk)"/><g clip-path="url(#cback)"><rect x="40" y="450" width="600" height="360" fill="url(#stoeb)"/><path d="M72 745C150 785 300 800 430 800" stroke="#2e1a10" stroke-width="90" fill="none" opacity=".6" filter="url(#sblur2)"/><path d="M110 640C170 595 250 562 320 532C400 497 455 447 525 367C575 307 625 247 670 202" stroke="#84644c" stroke-width="30" fill="none" opacity=".7" filter="url(#sblur3)"/><!-- shadow cast by front shoe on back shoe --><path d="M400 795C470 705 560 575 640 455C700 365 745 290 775 215L900 190L1010 200L1100 250L1000 500L700 800Z" fill="#1a0b04" opacity=".72" filter="url(#sblur2)"/><path d="M500 790C590 690 680 580 760 460C825 360 885 265 945 212L1010 200L1100 250L1000 500L700 800Z" fill="#0c0400" opacity=".55" filter="url(#sblur3)"/></g><!-- back heel counter --><path d="M1150 92C1170 88 1180 95 1185 110C1197 145 1204 182 1208 218L1100 250L1080 222C1115 190 1145 140 1150 92Z" fill="#5b3a21"/><!-- back lining --><path d="M905 195C960 160 1040 118 1100 98C1130 90 1150 92 1155 100C1150 135 1125 175 1095 205L1075 224C1060 205 1040 192 1015 184C990 182 965 200 945 227Z" fill="url(#slinb)"/><path d="M905 195C940 172 985 148 1020 132L1000 186C980 190 960 208 945 227Z" fill="#3a3b42" opacity=".85"/><!-- back laces --><g stroke="#34201a" stroke-width="11" stroke-linecap="round" fill="none"><path d="M694 172C715 150 755 165 773 187"/><path d="M657 207C690 203 720 220 741 237"/><path d="M612 255C650 250 680 268 708 285"/><path d="M564 303C600 299 645 315 678 333"/><path d="M522 360C560 355 605 368 642 387"/><path d="M706 196C675 245 632 305 596 350" stroke-width="7" opacity=".75"/></g><!-- front shoe sole --><path d="M420 845C415 860 425 876 450 889C520 916 650 931 780 931C900 929 1000 909 1090 876C1180 831 1260 761 1330 691L1375 709L1388 661L1492 621C1497 581 1500 540 1498 498L1300 650L1000 850L650 880Z" fill="#4a4541"/><path d="M1330 691L1375 709L1388 661L1492 621C1497 581 1500 540 1498 498C1450 560 1400 610 1330 665Z" fill="#3f3936"/><!-- front shoe upper --><path d="M425 845C420 800 440 755 490 710C540 665 600 630 650 595C720 545 780 450 840 365C880 305 920 245 960 208C985 188 1015 180 1040 190C1065 200 1085 225 1095 245C1150 235 1220 210 1290 180C1340 160 1390 148 1420 152C1440 158 1450 185 1460 215C1480 280 1500 370 1500 450L1497 500C1450 565 1390 615 1310 675C1240 745 1150 810 1050 860C950 892 800 905 650 900C540 892 460 870 425 845Z" fill="#5e4230"/><g clip-path="url(#cfront)"><ellipse cx="1190" cy="470" rx="150" ry="200" fill="#3f2616" opacity=".6" filter="url(#sblur2)" transform="rotate(20 1190 470)"/><rect x="400" y="500" width="700" height="420" fill="url(#stoe)"/><rect x="1080" y="150" width="440" height="560" fill="url(#sheel)"/><rect x="860" y="420" width="560" height="520" fill="url(#smid)"/><path d="M425 850C460 875 540 897 650 905C800 910 950 897 1050 865C1150 815 1240 750 1310 680C1390 620 1450 570 1497 505" stroke="#2e1a10" stroke-width="70" fill="none" opacity=".5" filter="url(#sblur2)"/><path d="M850 400C900 330 940 260 990 210" stroke="#7a583c" stroke-width="22" fill="none" opacity=".5" filter="url(#sblur3)"/></g><!-- front lining --><path d="M1100 246C1160 234 1230 207 1295 182C1340 165 1385 154 1417 160C1420 192 1395 242 1360 287C1335 317 1300 337 1270 327C1230 302 1180 264 1100 246Z" fill="url(#slin)"/><path d="M1100 246C1150 238 1190 224 1228 210L1214 282C1180 264 1140 252 1100 246Z" fill="#44454d"/><path d="M1270 327C1300 337 1335 317 1360 287C1395 242 1420 192 1417 160L1400 158C1400 200 1370 250 1340 285C1320 305 1295 318 1270 327Z" fill="#3d3934" opacity=".7"/><!-- collar edge dark line --><path d="M1095 245C1150 235 1220 210 1290 180C1340 160 1390 148 1420 152" stroke="#40240f" stroke-width="7" fill="none"/><path d="M905 195C960 160 1040 118 1100 98C1140 86 1170 88 1180 105" stroke="#40240f" stroke-width="6" fill="none"/><!-- seams --><g stroke="#452a18" stroke-width="4" fill="none" opacity=".5"><path d="M645 603C760 625 860 700 905 790C930 830 960 860 1000 878"/><path d="M850 470C930 520 1010 565 1080 578C1180 592 1290 590 1330 585"/><path d="M1080 420C1078 480 1075 540 1080 578"/><path d="M330 540C420 545 500 565 550 600"/></g><!-- front laces --><g stroke="#34201a" stroke-width="11" stroke-linecap="round" fill="none"><path d="M972 273C1000 268 1040 300 1068 336"/><path d="M933 324C965 318 1012 350 1044 381"/><path d="M894 375C930 370 982 400 1017 432"/><path d="M852 429C895 426 948 455 984 483"/><path d="M1035 255C1010 250 1002 222 1018 207C1040 190 1068 205 1080 230C1092 252 1096 268 1098 282" stroke-width="9"/><path d="M1052 262C1020 312 985 372 952 440" stroke-width="7" opacity=".75"/></g></g></svg>
<span class="t" style="left:344.50px;top:105.00px;font-size:20px;color:#000;transform:scaleX(0.9543);transform-origin:0 0;-webkit-text-stroke:.35px #000;">Vīriešu kurpes</span>
<span class="t" style="left:167.00px;top:138.50px;font-size:15px;color:#2daa62;transform:scaleX(0.9945);transform-origin:0 0;font-weight:bold;">Galvenais</span>
<span class="t" style="left:267.50px;top:138.50px;font-size:15px;color:#333;transform:scaleX(0.9882);transform-origin:0 0;">Raksturojumi</span>
<span class="t" style="left:383.50px;top:138.50px;font-size:15px;color:#333;transform:scaleX(0.9486);transform-origin:0 0;">Mērvienības</span>
<span class="t" style="left:490.50px;top:138.50px;font-size:15px;color:#333;transform:scaleX(1.0032);transform-origin:0 0;">Cenas</span>
<span class="t" style="left:563.50px;top:138.50px;font-size:15px;color:#333;transform:scaleX(0.9964);transform-origin:0 0;">Cenas (akcijas)</span>
<span class="t" style="left:695.50px;top:138.50px;font-size:15px;color:#333;transform:scaleX(0.9724);transform-origin:0 0;">Nomenklatūras svītrkods</span>
<span class="t" style="left:885.50px;top:138.50px;font-size:15px;color:#333;transform:scaleX(0.9631);transform-origin:0 0;">Faili</span>
<span class="t" style="left:941.50px;top:138.50px;font-size:15px;color:#333;transform:scaleX(0.9653);transform-origin:0 0;">Vēl...</span>
<span class="t" style="left:188.00px;top:176.00px;font-size:14px;color:#34364e;transform:scaleX(0.9598);transform-origin:0 0;font-weight:bold;">Ierakstīt un aizvērt</span>
<span class="t" style="left:356.00px;top:176.00px;font-size:14px;color:#444;transform:scaleX(0.9238);transform-origin:0 0;">Ierakstīt</span>
<span class="t" style="left:1841.50px;top:176.00px;font-size:14px;color:#444;transform:scaleX(0.9390);transform-origin:0 0;">Vēl</span>
<span class="t" style="left:167.00px;top:213.00px;font-size:14px;color:#4a4a4a;transform:scaleX(0.9383);transform-origin:0 0;">Īsais nosaukums:</span>
<span class="t" style="left:281.50px;top:213.00px;font-size:14px;color:#fff;transform:scaleX(0.9219);transform-origin:0 0;">Vīriešu kurpes</span>
<span class="t" style="left:1747.00px;top:213.00px;font-size:14px;color:#4a4a4a;transform:scaleX(0.9215);transform-origin:0 0;">Kods:</span>
<span class="t" style="left:1790.00px;top:213.00px;font-size:14px;color:#222;transform:scaleX(0.9106);transform-origin:0 0;">00000000020</span>
<span class="t" style="left:167.00px;top:247.00px;font-size:14px;color:#4a4a4a;transform:scaleX(0.9146);transform-origin:0 0;">Nosaukums (lv):</span>
<span class="t" style="left:280.50px;top:247.00px;font-size:14px;color:#222;transform:scaleX(0.9275);transform-origin:0 0;">Vīriešu kurpes</span>
<span class="t" style="left:1049.00px;top:247.00px;font-size:14px;color:#4a4a4a;transform:scaleX(0.9182);transform-origin:0 0;">Nosaukums (ru):</span>
<span class="t" style="left:167.00px;top:281.00px;font-size:14px;color:#4a4a4a;transform:scaleX(0.9194);transform-origin:0 0;">Nosaukums (en):</span>
<span class="t" style="left:1049.00px;top:281.00px;font-size:14px;color:#4a4a4a;transform:scaleX(0.9298);transform-origin:0 0;">Nosaukums (est):</span>
<span class="t" style="left:167.00px;top:314.00px;font-size:14px;color:#4a4a4a;transform:scaleX(0.9177);transform-origin:0 0;">Veids:</span>
<span class="t" style="left:299.00px;top:314.00px;font-size:14px;color:#9c9c9c;transform:scaleX(0.9249);transform-origin:0 0;">Krājums</span>
<span class="t" style="left:399.00px;top:314.00px;font-size:14px;color:#9c9c9c;transform:scaleX(0.9294);transform-origin:0 0;">Pakalpojums</span>
<span class="t" style="left:529.00px;top:314.00px;font-size:14px;color:#9c9c9c;transform:scaleX(0.8967);transform-origin:0 0;">Darbs</span>
<span class="t" style="left:619.00px;top:314.00px;font-size:14px;color:#9c9c9c;transform:scaleX(0.8902);transform-origin:0 0;">Darbu veids</span>
<span class="t" style="left:739.00px;top:314.00px;font-size:14px;color:#9c9c9c;transform:scaleX(0.9179);transform-origin:0 0;">Operācija</span>
<span class="t" style="left:178.00px;top:349.00px;font-size:14px;color:#222;transform:scaleX(0.9273);transform-origin:0 0;">Vispārīga informācija</span>
<span class="t" style="left:321.50px;top:349.00px;font-size:14px;color:#222;transform:scaleX(0.9346);transform-origin:0 0;">Pamata parametri</span>
<span class="t" style="left:447.50px;top:349.00px;font-size:14px;color:#222;transform:scaleX(0.9280);transform-origin:0 0;">Glabāšanas un iegādes parametri</span>
<span class="t" style="left:664.50px;top:349.00px;font-size:14px;color:#222;transform:scaleX(0.9329);transform-origin:0 0;">Papildus rekvizīti</span>
<span class="t" style="left:177.00px;top:385.00px;font-size:14px;color:#4a4a4a;transform:scaleX(0.8817);transform-origin:0 0;">Mērvienība:</span>
<span class="t" style="left:271.50px;top:385.00px;font-size:14px;color:#222;transform:scaleX(0.8624);transform-origin:0 0;">gab.</span>
<span class="t" style="left:387.00px;top:385.00px;font-size:14px;color:#3d4b86;transform:scaleX(0.9209);transform-origin:0 0;">gabals</span>
<span class="t" style="left:536.50px;top:385.00px;font-size:14px;color:#4a4a4a;transform:scaleX(0.8993);transform-origin:0 0;">Grupa:</span>
<span class="t" style="left:670.50px;top:385.00px;font-size:14px;color:#222;transform:scaleX(0.9194);transform-origin:0 0;">VĪRIEŠU</span>
<span class="t" style="left:177.00px;top:419.00px;font-size:14px;color:#4a4a4a;transform:scaleX(0.9260);transform-origin:0 0;">Pamata cena:</span>
<span class="t" style="left:291.80px;top:419.00px;font-size:14px;color:#222;transform:scaleX(0.9141);transform-origin:0 0;">200,00000</span>
<span class="t" style="left:387.50px;top:419.00px;font-size:14px;color:#1a57b0;transform:scaleX(0.9066);transform-origin:0 0;text-decoration:underline;">Cenu vēsture</span>
<span class="t" style="left:536.50px;top:419.00px;font-size:14px;color:#4a4a4a;transform:scaleX(0.9305);transform-origin:0 0;">Artikuls (piegādātāja):</span>
<span class="t" style="left:670.50px;top:419.00px;font-size:14px;color:#222;transform:scaleX(0.8879);transform-origin:0 0;">123-132-2011</span>
<span class="t" style="left:177.00px;top:453.00px;font-size:14px;color:#4a4a4a;transform:scaleX(0.9246);transform-origin:0 0;">Sezona:</span>
<span class="t" style="left:270.50px;top:453.00px;font-size:14px;color:#222;transform:scaleX(0.9352);transform-origin:0 0;">AW2015/2016</span>
<span class="t" style="left:536.50px;top:453.00px;font-size:14px;color:#4a4a4a;transform:scaleX(0.9369);transform-origin:0 0;">Produkta materiāls:</span>
<span class="t" style="left:670.50px;top:453.00px;font-size:14px;color:#222;transform:scaleX(0.9219);transform-origin:0 0;">Āda-Āda-Āda</span>
<span class="t" style="left:177.00px;top:487.00px;font-size:14px;color:#4a4a4a;transform:scaleX(0.9266);transform-origin:0 0;">Krāsa:</span>
<span class="t" style="left:270.50px;top:487.00px;font-size:14px;color:#222;transform:scaleX(0.9785);transform-origin:0 0;">Black</span>
<span class="t" style="left:536.50px;top:487.00px;font-size:14px;color:#4a4a4a;transform:scaleX(0.9278);transform-origin:0 0;">Piegādātājs:</span>
<span class="t" style="left:670.50px;top:487.00px;font-size:14px;color:#222;transform:scaleX(0.9200);transform-origin:0 0;">PIEGĀDĀTĀJS 1</span>
<span class="t" style="left:177.00px;top:520.00px;font-size:14px;color:#4a4a4a;transform:scaleX(0.8910);transform-origin:0 0;">Neaktīvs:</span>
<span class="t" style="left:176.50px;top:569.00px;font-size:16.5px;color:#0a9a48;letter-spacing:-0.148px;">Apraksts</span>
<span class="t" style="left:63.00px;top:3.00px;font-size:12px;color:#111;transform:scaleX(0.9203);transform-origin:0 0;">1C / Администратор</span>
<span class="t" style="left:172.00px;top:3.00px;font-size:12px;color:#111;transform:scaleX(0.8585);transform-origin:0 0;">(1C:Uzņēmums)</span>
<span class="t" style="left:1711.00px;top:3.00px;font-size:14px;color:#b6a99d;transform:scaleX(0.9424);transform-origin:0 0;font-weight:bold;">M</span>
<span class="t" style="left:1731.00px;top:3.00px;font-size:14px;color:#b6a99d;transform:scaleX(0.8567);transform-origin:0 0;font-weight:bold;">M+</span>
<span class="t" style="left:1754.50px;top:3.00px;font-size:14px;color:#b6a99d;transform:scaleX(0.9799);transform-origin:0 0;font-weight:bold;">M-</span>
<span class="t" style="left:19.00px;top:52.00px;font-size:14px;color:#444;transform:scaleX(0.9280);transform-origin:0 0;">Sākumlapa</span>
<span class="t" style="left:111.50px;top:52.00px;font-size:14px;color:#444;transform:scaleX(0.9294);transform-origin:0 0;">Nomenklatūra</span>
<span class="t" style="left:245.50px;top:52.00px;font-size:14px;color:#444;transform:scaleX(0.9331);transform-origin:0 0;">Vīriešu kurpes</span>
<span class="t" style="left:52.00px;top:136.00px;font-size:14px;color:#3c3c3c;transform:scaleX(0.8913);transform-origin:0 0;">Galvenais</span>
<span class="t" style="left:52.00px;top:171.00px;font-size:14px;color:#3c3c3c;transform:scaleX(0.9082);transform-origin:0 0;">Pārdošana</span>
<span class="t" style="left:52.00px;top:206.00px;font-size:14px;color:#3c3c3c;transform:scaleX(0.9155);transform-origin:0 0;">Iepirkumi</span>
<span class="t" style="left:52.00px;top:241.00px;font-size:14px;color:#3c3c3c;transform:scaleX(0.8845);transform-origin:0 0;">Nauda</span>
<span class="t" style="left:52.00px;top:276.00px;font-size:14px;color:#3c3c3c;transform:scaleX(0.9252);transform-origin:0 0;">Uzņēmums</span>
<span class="t" style="left:52.00px;top:311.00px;font-size:14px;color:#3c3c3c;transform:scaleX(0.9207);transform-origin:0 0;">Analīze</span>
<span class="t" style="left:52.00px;top:346.00px;font-size:14px;color:#3c3c3c;transform:scaleX(0.9297);transform-origin:0 0;">Uzstādījumi</span>
</div></body></html>
